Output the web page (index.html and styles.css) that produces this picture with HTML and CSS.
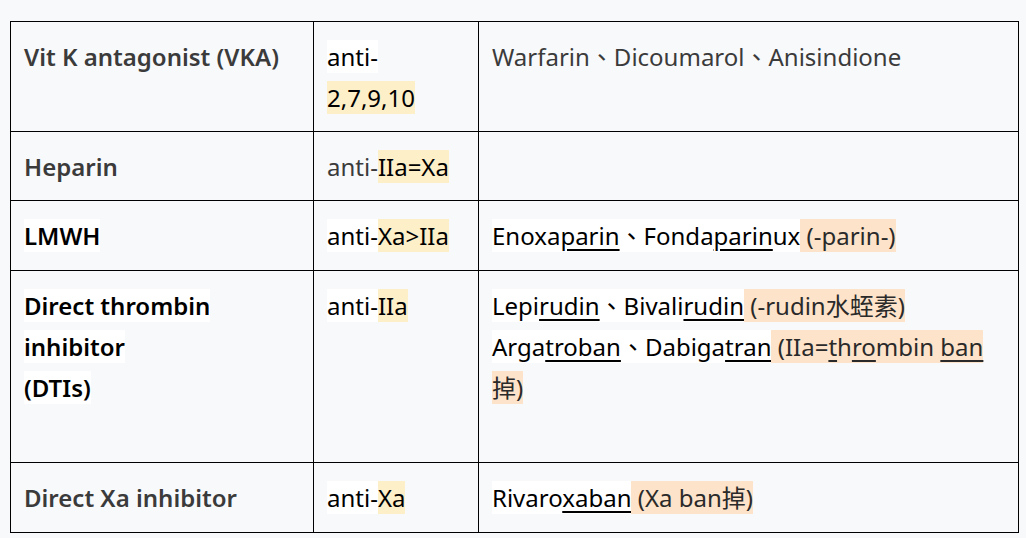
FILE: index.html
```html
<!DOCTYPE html>
<html lang="zh-Hant">
<head>
<meta charset="utf-8">
<title>Anticoagulants</title>
<link rel="stylesheet" href="styles.css">
</head>
<body>
<table class="drug-table">
  <colgroup>
    <col class="c1"><col class="c2"><col class="c3">
  </colgroup>
  <tbody>
    <tr class="first">
      <td class="name gray">Vit K antagonist (VKA)</td>
      <td><span class="w">anti-</span><br><span class="y">2,7,9,10</span></td>
      <td class="gray">Warfarin、Dicoumarol、Anisindione</td>
    </tr>
    <tr class="second">
      <td class="name gray">Heparin</td>
      <td class="gray">anti-<span class="y blk">IIa=Xa</span></td>
      <td></td>
    </tr>
    <tr class="short">
      <td class="name"><span class="w">LMWH</span></td>
      <td><span class="w">anti-</span><span class="y">Xa&gt;IIa</span></td>
      <td><span class="w">Enoxa<u>parin</u>、Fonda<u>parin</u>ux</span><span class="o"> (-parin-)</span></td>
    </tr>
    <tr class="tall">
      <td class="name"><span class="w">Direct thrombin</span><br><span class="w">inhibitor</span><br><span class="w">(DTIs)</span></td>
      <td><span class="w">anti-</span><span class="y">IIa</span></td>
      <td><span class="w">Lepi<u>rudin</u>、Bivali<u>rudin</u></span><span class="o"> (-rudin水蛭素)</span><br><span class="w">Arga<u>troban</u>、Dabiga<u>tran</u></span><span class="o"> (IIa=<u>t</u>h<u>ro</u>mbin <u>ban</u></span><br><span class="o">掉)</span></td>
    </tr>
    <tr class="short">
      <td class="name gray">Direct Xa inhibitor</td>
      <td><span class="w">anti-</span><span class="y">Xa</span></td>
      <td><span class="w">Rivaro<u>xaban</u></span><span class="o"> (Xa ban掉)</span></td>
    </tr>
  </tbody>
</table>
</body>
</html>
```

FILE: styles.css
```css
html, body {
  margin: 0;
  padding: 0;
  background: #f8f9fb;
}
body {
  padding: 21px 8px 0 10px;
  font-family: "Noto Sans", "Noto Sans CJK TC", sans-serif;
  font-size: 24px;
  color: #000;
}
.drug-table {
  border-collapse: collapse;
  width: 1009px;
  table-layout: fixed;
  background: #f8f9fb;
}
.c1 { width: 303px; }
.c2 { width: 165px; }
.c3 { width: auto; }
.drug-table td {
  border: 1px solid #000;
  padding: 14px 10px 13px 13px;
  line-height: 41px;
  vertical-align: top;
  box-sizing: border-box;
  white-space: nowrap;
}
.drug-table tr.first td { height: 109px; }
.drug-table tr.second td { height: 69px; }
.drug-table tr.short td { height: 70px; }
.drug-table tr.tall td { height: 192px; }
.name { font-weight: 600; }
.gray { color: #3b3b3b; }
.w { background: #ffffff; color: #000; }
.y { background: #fdefc8; color: #000; }
.o { background: #fde3c9; color: #2a2a2a; }
.blk { color: #000; }
u {
  text-decoration-thickness: 2px;
  text-underline-offset: 4px;
}
```
